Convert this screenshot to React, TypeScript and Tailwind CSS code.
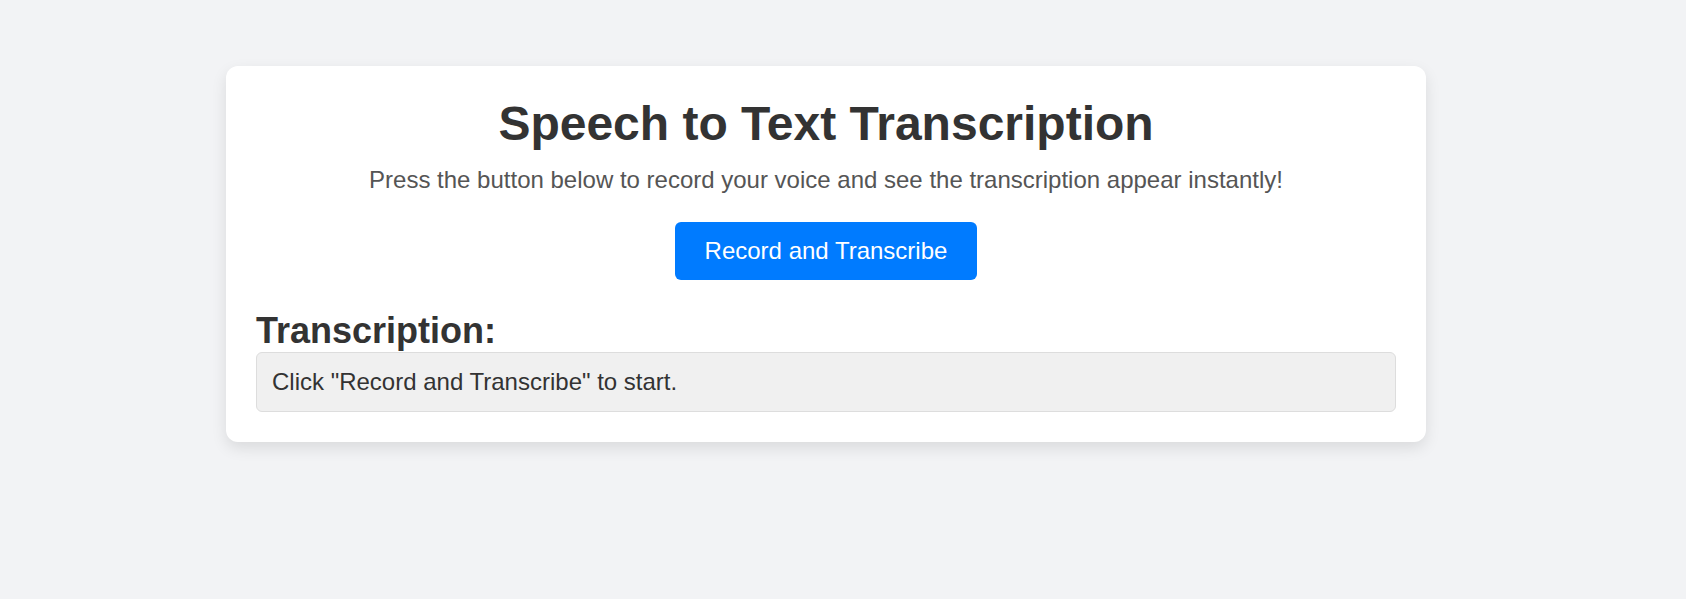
import React from "react";

export default function App() {
  return (
    <div
      className="min-h-[599px] w-full bg-[#f2f3f5] pt-[66px]"
      style={{ fontFamily: '"Liberation Sans", Arial, sans-serif' }}
    >
      <div className="ml-[226px] w-[1200px] rounded-[12px] bg-white p-[30px] shadow-[0_6px_15px_rgba(0,0,0,0.1)]">
        <h1 className="text-center text-[48px] font-bold leading-[55px] text-[#333333]">
          Speech to Text Transcription
        </h1>
        <p className="mt-[15px] text-center text-[24px] leading-[28px] text-[#555555]">
          Press the button below to record your voice and see the transcription appear instantly!
        </p>
        <div className="mt-[28px] flex justify-center">
          <button className="h-[58px] rounded-[6px] bg-[#007bff] px-[30px] text-[24px] leading-[28px] text-white">
            Record and Transcribe
          </button>
        </div>
        <h2 className="mt-[30px] text-[36px] font-bold leading-[41px] text-[#333333]">
          Transcription:
        </h2>
        <div className="mt-[1px] h-[60px] rounded-[6px] border border-[#dddddd] bg-[#f0f0f0] px-[15px] py-[15px] text-[24px] leading-[28px] text-[#333333]">
          Click "Record and Transcribe" to start.
        </div>
      </div>
    </div>
  );
}
